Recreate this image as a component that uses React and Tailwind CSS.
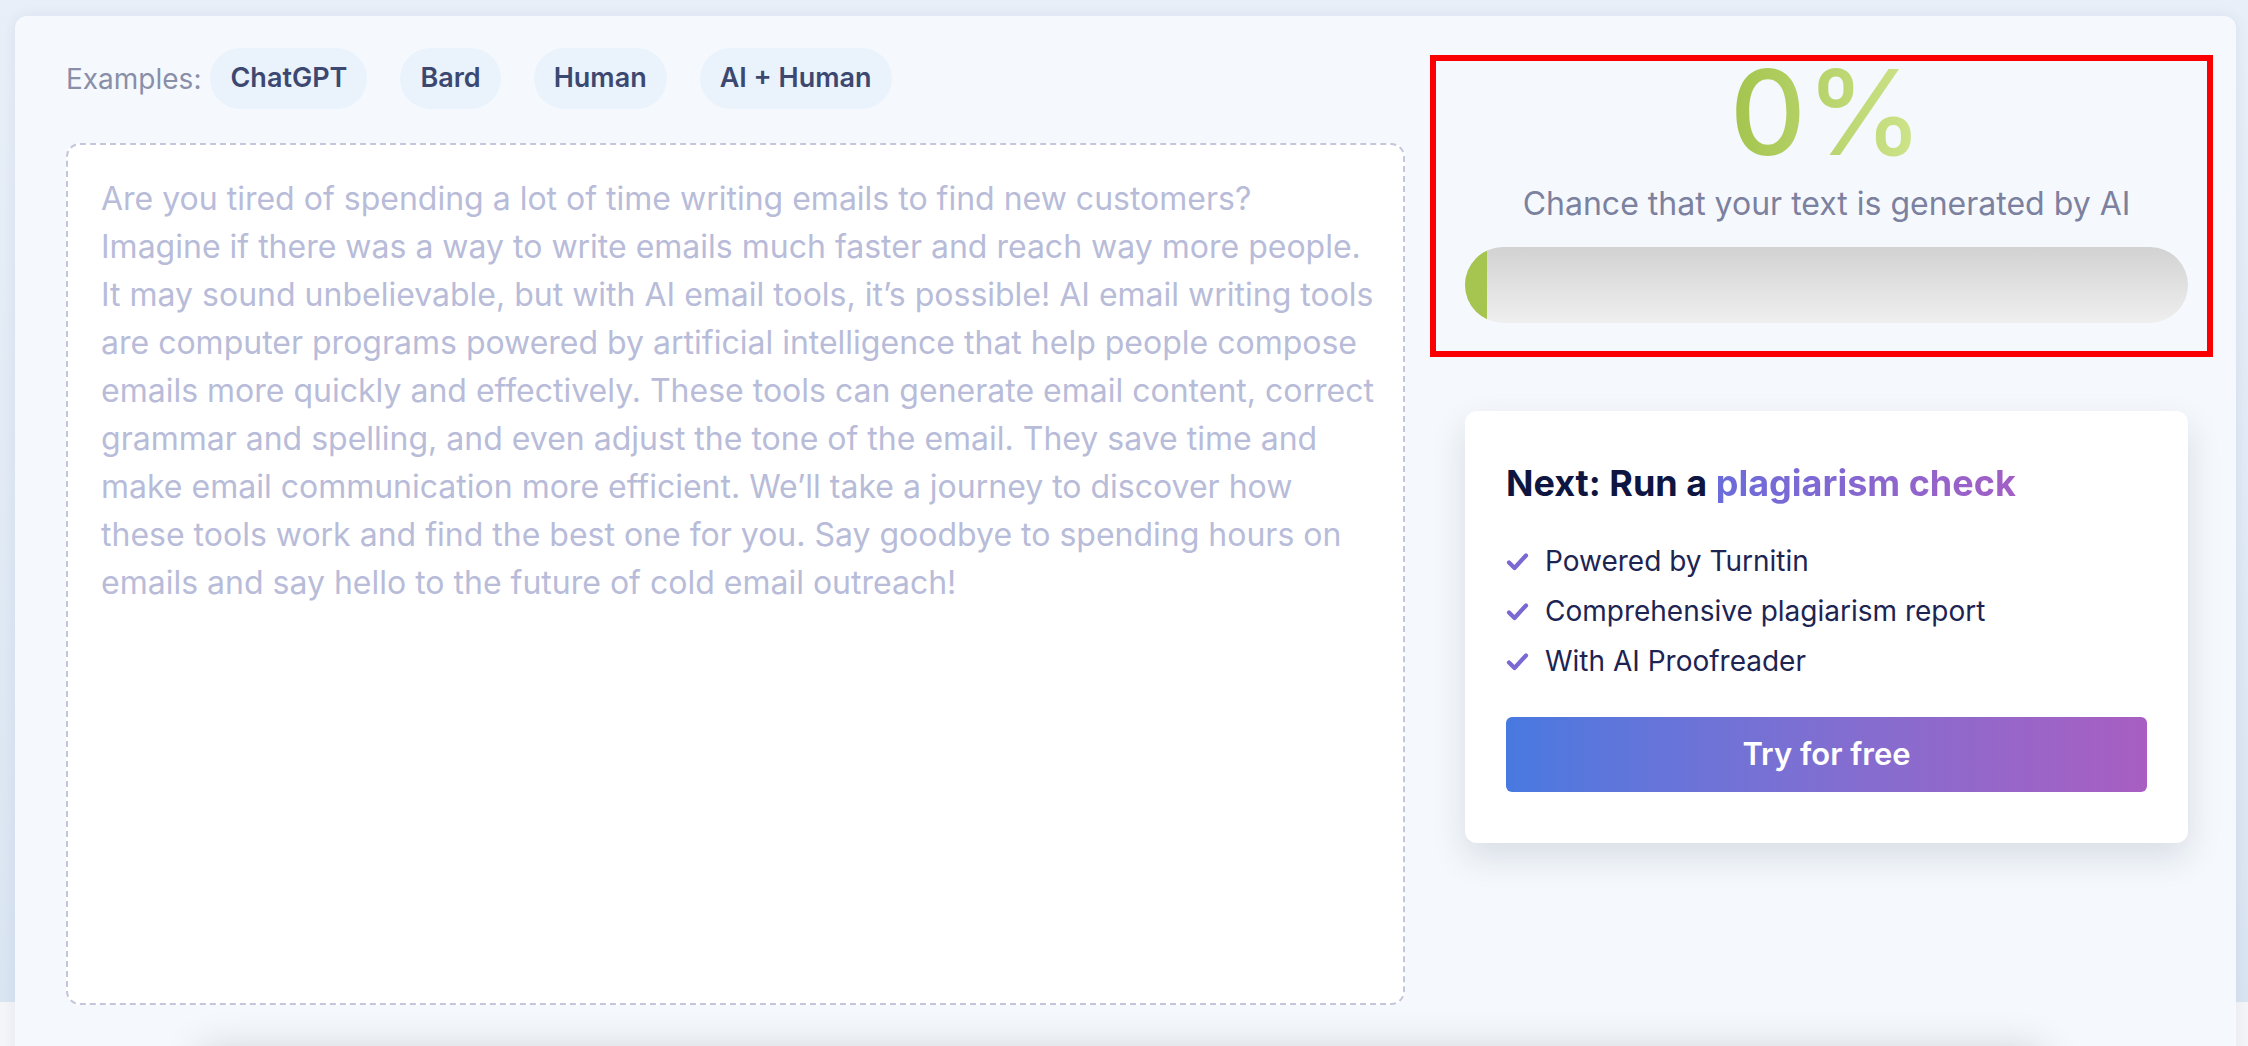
import React from 'react';

const examples = ['ChatGPT', 'Bard', 'Human', 'AI + Human'];

const sampleLines = [
  'Are you tired of spending a lot of time writing emails to find new customers?',
  'Imagine if there was a way to write emails much faster and reach way more people.',
  'It may sound unbelievable, but with AI email tools, it’s possible! AI email writing tools',
  'are computer programs powered by artificial intelligence that help people compose',
  'emails more quickly and effectively. These tools can generate email content, correct',
  'grammar and spelling, and even adjust the tone of the email. They save time and',
  'make email communication more efficient. We’ll take a journey to discover how',
  'these tools work and find the best one for you. Say goodbye to spending hours on',
  'emails and say hello to the future of cold email outreach!',
];

const perks = ['Powered by Turnitin', 'Comprehensive plagiarism report', 'With AI Proofreader'];

const Check = () => (
  <svg className="w-[23px] h-[19px] shrink-0" viewBox="0 0 23 19" fill="none">
    <path d="M3 10.5l5.5 5.5L20 3.5" stroke="#7b68d2" strokeWidth="4.2" strokeLinecap="round" strokeLinejoin="round" />
  </svg>
);

const App = () => {
  const score = 0;

  return (
    <div className="min-h-screen overflow-hidden pt-[16px] font-['Inter',sans-serif] bg-[linear-gradient(180deg,#e8eff8_0px,#dae5f2_1002px,#f4f5f8_1002px)]">
      <div className="ml-[15px] mr-[12px] rounded-[12px] bg-[#f5f9fd] shadow-[0_0_14px_rgba(40,70,130,0.08)] pt-[32px] pl-[51px] pr-[48px] pb-[200px]">
        <div className="flex gap-[60px]">
          {/* left: examples + text box */}
          <div className="w-[1339px] shrink-0">
            <div className="flex items-center h-[61px]">
              <span className="text-[28px] text-[#8a8fa9] mr-[9px]">Examples:</span>
              <div className="flex gap-[33px]">
                {examples.map((ex) => (
                  <button key={ex} className="h-[61px] px-[20px] rounded-full bg-[#eaf3fc] text-[27px] font-semibold text-[#3d4870]">
                    {ex}
                  </button>
                ))}
              </div>
            </div>

            <div className="mt-[34px] h-[862px] rounded-[14px] border-2 border-dashed border-[#c4c6dc] bg-white pt-[30px] px-[33px]">
              <p className="text-[32px] leading-[48px] text-[#b8bcd9] whitespace-nowrap">
                {sampleLines.map((line, i) => (
                  <span key={i} className="block">{line}</span>
                ))}
              </p>
            </div>
          </div>

          {/* right: result + upsell */}
          <div className="w-[723px] shrink-0">
            <div className="mt-[7px] -ml-[35px] -mr-[25px] border-[6px] border-[#fb0000] pl-[29px] pr-[19px] pb-[28px] flex flex-col items-center">
              <div className="text-[118px] leading-[102px] font-medium bg-gradient-to-r from-[#a3c44c] to-[#cfe58c] bg-clip-text text-transparent">
                {score}%
              </div>
              <p className="mt-[22px] text-[32px] leading-[38px] text-[#7c819f]">Chance that your text is generated by AI</p>
              <div className="mt-[24px] w-full h-[76px] rounded-full overflow-hidden bg-gradient-to-b from-[#d2d2d2] to-[#efefef]">
                <div className="h-full w-[22px] bg-[#a6c550]" />
              </div>
            </div>

            <div className="mt-[54px] rounded-[12px] bg-white shadow-[0_14px_34px_rgba(20,30,60,0.13)] pt-[51px] px-[41px] pb-[51px]">
              <h2 className="text-[36px] leading-[42px] font-bold text-[#0e1541]">
                Next: Run a{' '}
                <span className="bg-gradient-to-r from-[#6a6cdb] to-[#a25fc4] bg-clip-text text-transparent">plagiarism check</span>
              </h2>
              <ul className="mt-[32px]">
                {perks.map((p) => (
                  <li key={p} className="flex items-center h-[50px] gap-[16px]">
                    <Check />
                    <span className="text-[28px] text-[#1d2452]">{p}</span>
                  </li>
                ))}
              </ul>
              <button className="mt-[31px] w-full h-[75px] rounded-[6px] bg-gradient-to-r from-[#4779e0] to-[#a85ec2] text-white text-[31px] font-semibold">
                Try for free
              </button>
            </div>
          </div>
        </div>

        <div className="mt-[45px] ml-[134px] w-[1843px] h-[120px] bg-white shadow-[0_0_40px_rgba(0,0,0,0.16)]" />
      </div>
    </div>
  );
};

export default App;
